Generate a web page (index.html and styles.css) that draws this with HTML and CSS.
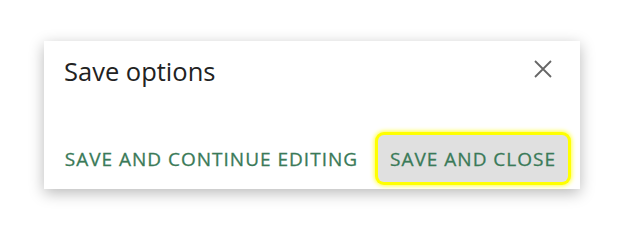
FILE: index.html
```html
<!DOCTYPE html>
<html>
<head>
<meta charset="utf-8">
<link rel="stylesheet" href="styles.css">
</head>
<body>
<div class="dialog">
  <div class="header">
    <h2 class="title">Save options</h2>
    <button class="close" aria-label="Close">
      <svg width="18" height="18" viewBox="0 0 18 18"><path d="M1 1L17 17M17 1L1 17" stroke="#666" stroke-width="1.8" fill="none"/></svg>
    </button>
  </div>
  <div class="footer">
    <button class="btn">SAVE AND CONTINUE EDITING</button>
    <button class="btn btn-focus">SAVE AND CLOSE</button>
  </div>
</div>
</body>
</html>
```
FILE: styles.css
```css
html, body { margin: 0; padding: 0; background: #fff; }
body { padding: 41px 44px; }
.dialog {
  width: 536px;
  height: 148px;
  box-sizing: border-box;
  background: #fff;
  box-shadow: 0 4px 14px rgba(0,0,0,0.28);
  display: flex;
  flex-direction: column;
  justify-content: space-between;
  padding: 0 12px 7px 8px;
}
.header {
  display: flex;
  align-items: flex-start;
  justify-content: space-between;
  padding: 12px 16px 0 12px;
}
.title {
  margin: 0;
  font-family: "Open Sans", sans-serif;
  font-weight: 400;
  font-size: 25.5px;
  color: #222;
  line-height: 36px;
}
.close {
  border: 0;
  background: none;
  padding: 0;
  margin-top: 7px;
  width: 18px;
  height: 18px;
}
.footer {
  display: flex;
  justify-content: flex-end;
  gap: 8px;
}
.btn {
  font-family: "Open Sans", sans-serif;
  font-size: 19px;
  font-weight: 400;
  letter-spacing: 1px;
  -webkit-text-stroke: 0.3px #3a7a58;
  color: #3a7a58;
  background: none;
  border: 0;
  border-radius: 6px;
  height: 47px;
  padding: 0 12px;
}
.btn-focus {
  background: #e0e0e0;
  box-shadow: 0 0 0 3px #ffff00, 0 0 4px 4px #ffff44;
}
```
